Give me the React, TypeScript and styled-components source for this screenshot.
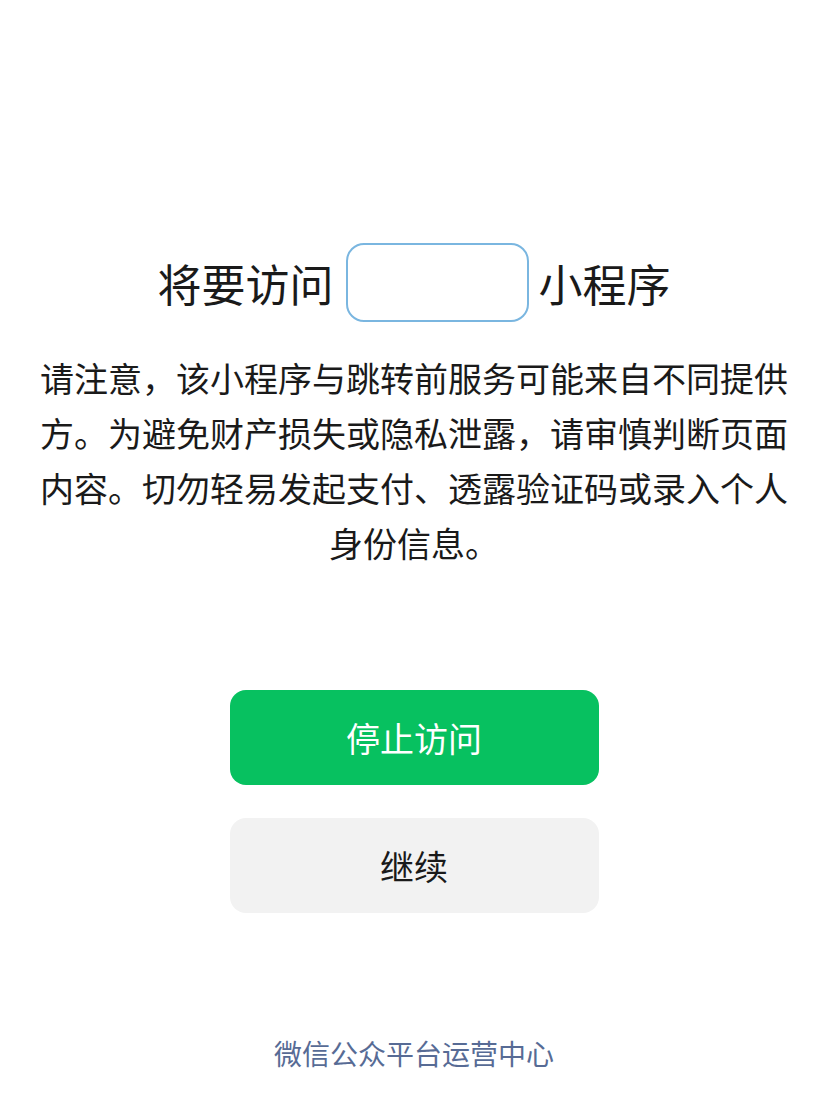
import styled, { createGlobalStyle } from "styled-components";

const GlobalStyle = createGlobalStyle`
  html, body {
    margin: 0;
    padding: 0;
    background: #ffffff;
  }
  body {
    font-family: "Noto Sans CJK SC", "Noto Sans", sans-serif;
    color: #1a1a1a;
  }
`;

const App: React.FunctionComponent = () => {
  return (
    <>
      <GlobalStyle />
      <Page>
        <Title>
          <span>将要访问</span>
          <NameBox />
          <span>小程序</span>
        </Title>
        <Notice>
          请注意，该小程序与跳转前服务可能来自不同提供方。为避免财产损失或隐私泄露，请审慎判断页面内容。切勿轻易发起支付、透露验证码或录入个人身份信息。
        </Notice>
        <Actions>
          <Button $primary>停止访问</Button>
          <Button>继续</Button>
        </Actions>
        <Footer>微信公众平台运营中心</Footer>
      </Page>
    </>
  );
};

const Page = styled.main`
  box-sizing: border-box;
  width: 820px;
  min-height: 1110px;
  padding: 243px 32px 0 40px;
  display: flex;
  flex-direction: column;
  align-items: center;
`;

const Title = styled.h1`
  margin: 0;
  display: flex;
  align-items: center;
  font-size: 44px;
  font-weight: 400;
  line-height: 1;
  color: #1a1a1a;
`;

const NameBox = styled.div`
  box-sizing: border-box;
  width: 183px;
  height: 79px;
  margin: 0 10px 0 12px;
  border: 2px solid #7ab6e0;
  border-radius: 18px;
`;

const Notice = styled.p`
  width: 748px;
  margin: 28px 0 0;
  font-size: 34px;
  line-height: 55px;
  text-align: center;
  color: #1a1a1a;
`;

const Actions = styled.div`
  margin-top: 120px;
  display: flex;
  flex-direction: column;
  gap: 33px;
`;

const Button = styled.button<{ $primary?: boolean }>`
  width: 369px;
  height: 95px;
  border: none;
  border-radius: 16px;
  font-family: inherit;
  font-size: 34px;
  background: ${(p) => (p.$primary ? "#07c160" : "#f2f2f2")};
  color: ${(p) => (p.$primary ? "#ffffff" : "#1a1a1a")};
  cursor: pointer;
`;

const Footer = styled.div`
  margin-top: 120px;
  font-size: 28px;
  line-height: 40px;
  color: #576b95;
`;

export default App;
